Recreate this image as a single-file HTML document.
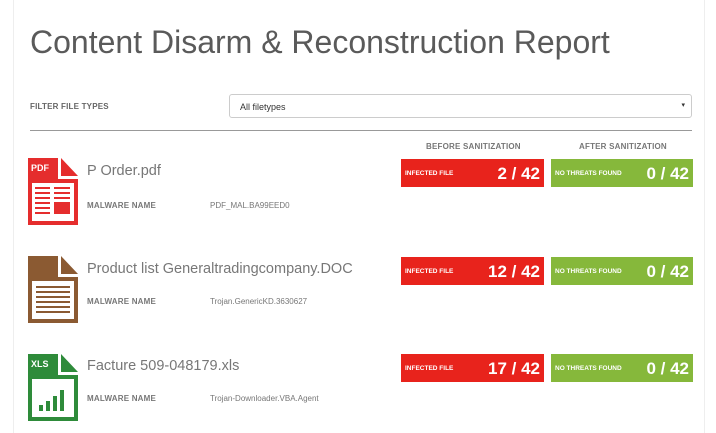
<!DOCTYPE html>
<html><head><style>
body{margin:0;width:716px;height:433px;background:#fff;position:relative;overflow:hidden;font-family:"Liberation Sans",sans-serif;}
.a{position:absolute;}
.t{left:30px;top:24px;font-size:32px;color:#5a5a5a;letter-spacing:0;}
.lbl{font-size:8px;color:#666;font-weight:bold;letter-spacing:0.2px;}
.sel{left:229px;top:94px;width:463px;height:24px;border:1px solid #ccc;border-radius:3px;box-sizing:border-box;font-size:9px;color:#333;padding:7px 10px;}
.hr{left:30px;top:130px;width:662px;height:1px;background:#999;}
.box{height:28px;color:#fff;box-sizing:border-box;}
.box span{position:absolute;left:4px;top:11px;font-size:6.5px;font-weight:bold;}
.box b{position:absolute;right:4px;top:5px;font-size:17px;}
.red{background:#e8231c;left:401px;width:143px;}
.grn{background:#86b83b;left:551px;width:142px;}
.fn{left:87px;font-size:14.5px;color:#777;}
.mv{font-size:8px;color:#777;}
</style></head><body>
<div class="a" style="left:13px;top:0;width:1px;height:433px;background:#eee"></div>
<div class="a" style="left:704px;top:0;width:1px;height:433px;background:#eee"></div>
<div class="a t">Content Disarm &amp; Reconstruction Report</div>
<div class="a lbl" style="left:30px;top:102px;">FILTER FILE TYPES</div>
<div class="a sel">All filetypes<span style="position:absolute;right:6px;top:6px;font-size:7px">▾</span></div>
<div class="a hr"></div>
<div class="a lbl" style="left:426px;top:142px;color:#777">BEFORE SANITIZATION</div>
<div class="a lbl" style="left:579px;top:142px;color:#777">AFTER SANITIZATION</div>

<svg class="a" style="left:28px;top:158px" width="50" height="67" viewBox="0 0 50 67">
<path d="M0 0H30V21H50V67H0Z" fill="#e52d2d"/><path d="M33 0L50 18H33Z" fill="#e52d2d"/>
<rect x="4" y="25" width="42" height="38" fill="#fff"/>
<text x="3" y="13" font-size="9" font-weight="bold" fill="#fff" font-family="Liberation Sans">PDF</text>
<g fill="#e52d2d"><rect x="7" y="29" width="15" height="2"/><rect x="7" y="34" width="15" height="2"/><rect x="7" y="39" width="15" height="2"/><rect x="7" y="44" width="15" height="2"/><rect x="7" y="49" width="15" height="2"/><rect x="7" y="54" width="15" height="2"/><rect x="26" y="29" width="16" height="2"/><rect x="26" y="34" width="16" height="2"/><rect x="26" y="39" width="16" height="2"/><rect x="26" y="44" width="16" height="12"/></g>
</svg>
<div class="a fn" style="top:163px">P Order.pdf</div>
<div class="a lbl" style="left:87px;top:201px;color:#777">MALWARE NAME</div>
<div class="a mv" style="left:210px;top:201px">PDF_MAL.BA99EED0</div>
<div class="a box red" style="top:159px"><span>INFECTED FILE</span><b>2 / 42</b></div>
<div class="a box grn" style="top:159px"><span>NO THREATS FOUND</span><b>0 / 42</b></div>

<svg class="a" style="left:28px;top:256px" width="50" height="67" viewBox="0 0 50 67">
<path d="M0 0H30V21H50V67H0Z" fill="#8b5a32"/><path d="M33 0L50 18H33Z" fill="#8b5a32"/>
<rect x="4" y="25" width="42" height="38" fill="#fff"/>
<g fill="#8b5a32"><rect x="8" y="30" width="34" height="2"/><rect x="8" y="35" width="34" height="2"/><rect x="8" y="40" width="34" height="2"/><rect x="8" y="45" width="34" height="2"/><rect x="8" y="50" width="34" height="2"/><rect x="8" y="55" width="34" height="2"/></g>
</svg>
<div class="a fn" style="top:261px">Product list Generaltradingcompany.DOC</div>
<div class="a lbl" style="left:87px;top:297px;color:#777">MALWARE NAME</div>
<div class="a mv" style="left:210px;top:297px">Trojan.GenericKD.3630627</div>
<div class="a box red" style="top:257px"><span>INFECTED FILE</span><b>12 / 42</b></div>
<div class="a box grn" style="top:257px"><span>NO THREATS FOUND</span><b>0 / 42</b></div>

<svg class="a" style="left:28px;top:354px" width="50" height="67" viewBox="0 0 50 67">
<path d="M0 0H30V21H50V67H0Z" fill="#2e8b3a"/><path d="M33 0L50 18H33Z" fill="#2e8b3a"/>
<rect x="4" y="25" width="42" height="38" fill="#fff"/>
<text x="3" y="13" font-size="9" font-weight="bold" fill="#fff" font-family="Liberation Sans">XLS</text>
<g fill="#2e8b3a"><rect x="11" y="51" width="4" height="6"/><rect x="18" y="47" width="4" height="10"/><rect x="25" y="42" width="4" height="15"/><rect x="32" y="36" width="4" height="21"/></g>
</svg>
<div class="a fn" style="top:358px">Facture 509-048179.xls</div>
<div class="a lbl" style="left:87px;top:394px;color:#777">MALWARE NAME</div>
<div class="a mv" style="left:210px;top:394px">Trojan-Downloader.VBA.Agent</div>
<div class="a box red" style="top:354px"><span>INFECTED FILE</span><b>17 / 42</b></div>
<div class="a box grn" style="top:354px"><span>NO THREATS FOUND</span><b>0 / 42</b></div>
</body></html>
